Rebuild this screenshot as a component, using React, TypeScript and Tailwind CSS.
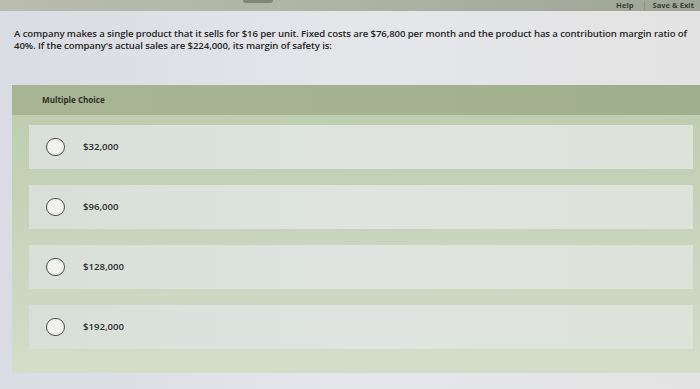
const options = ["$32,000", "$96,000", "$128,000", "$192,000"];

export default function App() {
  return (
    <div
      className="w-[700px] h-[389px] overflow-hidden flex flex-col bg-gradient-to-r from-[#d9dce2] via-[#e4e6ea] to-[#e4e3e3] text-[#2a2a2a]"
      style={{ fontFamily: "'Open Sans', Lato, sans-serif" }}
    >
      {/* Top bar */}
      <div className="h-[11px] shrink-0 bg-gradient-to-r from-[#b9bcae] via-[#aeb3a4] to-[#9fa597] flex items-center justify-end pr-[6px] relative">
        <div className="absolute left-[243px] top-0 w-[30px] h-[3px] rounded-b-sm bg-[#7f8873]" />
        <span className="text-[7.6px] font-bold text-[#3b3f38] mr-[10px]">Help</span>
        <span className="w-px h-[10px] bg-[#8e9486] mr-[8px]" />
        <span className="text-[7.6px] font-bold text-[#3b3f38]">Save &amp; Exit</span>
      </div>

      {/* Question */}
      <div className="pl-[14px] pt-[17px] text-[9.6px] leading-[12px] font-semibold text-[#262626] whitespace-nowrap tracking-[-0.1px]">
        A company makes a single product that it sells for $16 per unit. Fixed costs are $76,800 per month and the product has a contribution margin ratio of
        <br />
        40%. If the company's actual sales are $224,000, its margin of safety is:
      </div>

      {/* Panel */}
      <div className="ml-[12px] mt-[33px] h-[288px] shrink-0 flex flex-col bg-gradient-to-b from-[#bccbad] to-[#d3ddc9]">
        <div className="h-[30px] shrink-0 bg-gradient-to-r from-[#a7b595] via-[#a5b393] to-[#9fae8c] flex items-center pl-[30px]">
          <span className="text-[8.1px] font-bold text-[#2e3128]">Multiple Choice</span>
        </div>
        <div className="flex flex-col gap-[16px] pt-[10px] pl-[17px] pr-[7px]">
          {options.map((o) => (
            <div
              key={o}
              className="h-[44px] flex items-center bg-gradient-to-r from-[#d8dfd8] via-[#dfe4e0] to-[#dde2da]"
            >
              <span className="ml-[17px] w-[19px] h-[18px] rounded-full border-[1.5px] border-[#4d4f4a] bg-[#f1f2f0]" />
              <span className="ml-[18px] text-[9.6px] font-semibold text-[#2d2f2b]">{o}</span>
            </div>
          ))}
        </div>
      </div>
    </div>
  );
}
